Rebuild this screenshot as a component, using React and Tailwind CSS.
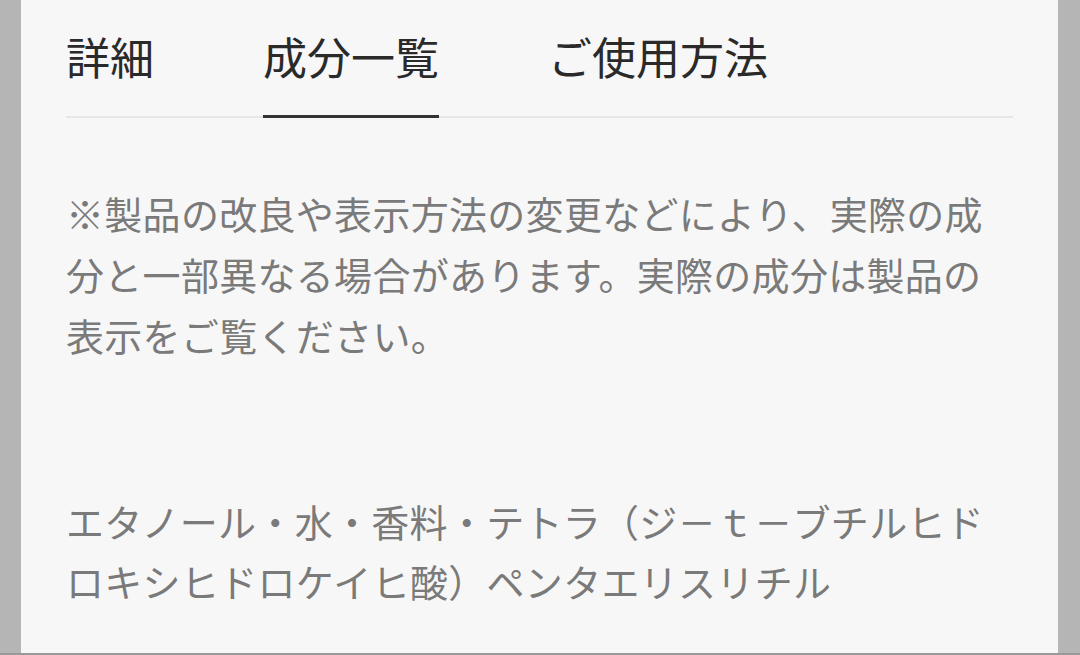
export default function App() {
  const font = { fontFamily: '"Noto Sans CJK JP", "Noto Sans", sans-serif' };
  return (
    <div className="w-[1080px] h-[655px] overflow-hidden bg-[#b5b5b5] flex flex-col" style={font}>
      <div className="flex-1 flex min-h-0">
        <div className="w-[21px] bg-[#b5b5b5]" />
        <div className="flex-1 bg-[#f7f7f7] px-[45px] pt-[26px]">
          <div className="flex gap-[109px] border-b-2 border-[#e6e6e6]">
            <div className="text-[44px] leading-[60px] font-normal text-[#2a2a2a] pb-[29px] -mb-[2px] border-b-[3px] border-transparent">詳細</div>
            <div className="text-[44px] leading-[60px] font-normal text-[#2a2a2a] pb-[29px] -mb-[2px] border-b-[3px] border-[#333]">成分一覧</div>
            <div className="text-[44px] leading-[60px] font-normal text-[#2a2a2a] pb-[29px] -mb-[2px] border-b-[3px] border-transparent">ご使用方法</div>
          </div>
          <p className="mt-[64px] text-[38px] tracking-[0.3px] leading-[61px] text-[#7a7a7a]">
            ※製品の改良や表示方法の変更などにより、実際の成分と一部異なる場合があります。実際の成分は製品の表示をご覧ください。
          </p>
          <p className="mt-[126px] text-[38px] tracking-[0.3px] leading-[60px] text-[#7a7a7a]">
            エタノール・水・香料・テトラ（ジ－ｔ－ブチルヒドロキシヒドロケイヒ酸）ペンタエリスリチル
          </p>
        </div>
        <div className="w-[22px] bg-[#b5b5b5]" />
      </div>
      <div className="h-[2px] bg-[#999]" />
    </div>
  );
}
